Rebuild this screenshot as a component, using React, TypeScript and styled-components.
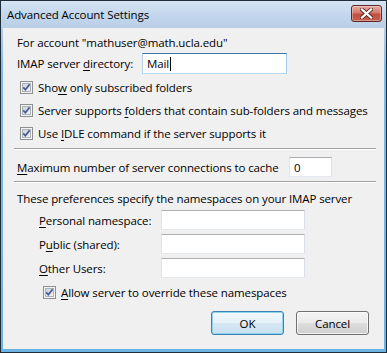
import React from 'react';
import styled, { createGlobalStyle } from 'styled-components';

const Global = createGlobalStyle`
  html, body { margin: 0; padding: 0; background: #ffffff; }
  body { font-family: "Open Sans", "Noto Sans", sans-serif; font-size: 11.5px; letter-spacing: -0.1px; color: #000; }
  #root { width: 387px; height: 353px; }
`;

const Window = styled.div`
  width: 387px;
  height: 353px;
  box-sizing: border-box;
  border: 1px solid #1f2c3a;
  display: flex;
  flex-direction: column;
  background: #6bb3e3;
  overflow: hidden;
`;

const TitleBar = styled.div`
  height: 27px;
  flex: none;
  display: flex;
  align-items: flex-start;
  justify-content: space-between;
  padding: 0 4px 0 6px;
  background: linear-gradient(to bottom, #d6e4f3 0%, #c4d7ed 50%, #b9cee7 100%);
`;

const Title = styled.span`
  font-size: 11.5px;
  line-height: 16px;
  margin-top: 6px;
  color: #000;
`;

const CloseButton = styled.div`
  width: 31px;
  height: 17px;
  box-sizing: border-box;
  margin-top: 4px;
  border: 1px solid #5f2922;
  border-radius: 3px;
  display: flex;
  align-items: center;
  justify-content: center;
  background: linear-gradient(to bottom, #e8a99f 0%, #d47a6d 45%, #c44d3e 55%, #c9604f 100%);
  box-shadow: inset 0 0 0 1px rgba(255, 255, 255, 0.35);
`;

const Frame = styled.div`
  flex: 1;
  display: flex;
  min-height: 0;
  padding: 0 2px 3px 2px;
  background: linear-gradient(to bottom, #b9cee7 0px, #7fbbe6 40px, #6bb3e3 100%);
`;

const Client = styled.div`
  flex: 1;
  min-width: 0;
  overflow: hidden;
  background: #f0f0f0;
  padding: 6px 8px 0 8px;
  display: flex;
  flex-direction: column;
`;

const Row = styled.div<{ $indent?: number; $h?: number; $mt?: number }>`
  display: flex;
  align-items: center;
  margin-left: ${(p) => p.$indent ?? 6}px;
  height: ${(p) => p.$h ?? 16}px;
  margin-top: ${(p) => p.$mt ?? 0}px;
  white-space: nowrap;
  flex: none;
`;

const Label = styled.span<{ $w?: number }>`
  display: inline-block;
  width: ${(p) => (p.$w ? `${p.$w}px` : 'auto')};
  flex: none;
`;

const Field = styled.div<{ $w: number; $h?: number; $focus?: boolean }>`
  width: ${(p) => p.$w}px;
  height: ${(p) => p.$h ?? 20}px;
  flex: none;
  box-sizing: border-box;
  background: #fff;
  border: 1px solid ${(p) => (p.$focus ? '#5c93bc' : '#abadb3')};
  border-top-color: ${(p) => (p.$focus ? '#3d7bad' : '#abadb3')};
  border-right-color: ${(p) => (p.$focus ? '#a4c9e3' : '#dbdfe6')};
  border-bottom-color: ${(p) => (p.$focus ? '#b7d9ed' : '#e3e9ef')};
  border-left-color: ${(p) => (p.$focus ? '#b5cfe7' : '#e2e3ea')};
  padding: 0 0 0 4px;
  display: flex;
  align-items: center;
`;

const Caret = styled.span`
  display: inline-block;
  width: 1px;
  height: 14px;
  background: #000;
  margin-left: 1px;
`;

const Separator = styled.div<{ $mt: number; $mb: number }>`
  height: 1px;
  flex: none;
  margin-top: ${(p) => p.$mt}px;
  margin-bottom: ${(p) => p.$mb}px;
  margin-left: 3px;
  background: #a0a0a0;
  box-shadow: 0 1px 0 #ffffff;
`;

const CheckRow = styled.div<{ $indent: number; $h: number; $mt?: number }>`
  display: flex;
  align-items: center;
  flex: none;
  height: ${(p) => p.$h}px;
  margin-left: ${(p) => p.$indent}px;
  margin-top: ${(p) => p.$mt ?? 0}px;
  gap: 5px;
  white-space: nowrap;
`;

const Buttons = styled.div`
  display: flex;
  flex: none;
  justify-content: flex-end;
  gap: 12px;
  margin-top: 7px;
  margin-right: 7px;
`;

const Button = styled.div<{ $default?: boolean }>`
  width: 73px;
  height: 24px;
  box-sizing: border-box;
  border-radius: 3px;
  border: 1px solid ${(p) => (p.$default ? '#3c7fb1' : '#707070')};
  display: flex;
  align-items: center;
  justify-content: center;
  background: ${(p) =>
    p.$default
      ? 'linear-gradient(to bottom, #f4f9fc 0%, #e6f1f8 48%, #d5e7f3 52%, #c9e0ef 100%)'
      : 'linear-gradient(to bottom, #f2f2f2 0%, #ebebeb 48%, #dddddd 52%, #cfcfcf 100%)'};
  box-shadow: inset 0 0 0 1px ${(p) => (p.$default ? '#8fd3f1' : 'rgba(255,255,255,0.7)')};
`;

const U = styled.span`
  text-decoration: underline;
  text-underline-offset: 2px;
`;

const CheckBox: React.FC = () => (
  <svg width="13" height="13" viewBox="0 0 13 13" style={{ flex: 'none' }}>
    <defs>
      <linearGradient id="cbg" x1="0" y1="0" x2="1" y2="1">
        <stop offset="0" stopColor="#cbcfd5" />
        <stop offset="1" stopColor="#f6f6f6" />
      </linearGradient>
    </defs>
    <rect x="0.5" y="0.5" width="12" height="12" fill="#f4f4f4" stroke="#8e8f8f" />
    <rect x="2.5" y="2.5" width="8" height="8" fill="url(#cbg)" stroke="#aeb3b9" />
    <path d="M3.2 6.3 L5.4 8.6 L9.6 3.4" fill="none" stroke="#4a5f97" strokeWidth="1.7" />
  </svg>
);

const CloseX: React.FC = () => (
  <svg width="13" height="11" viewBox="0 0 13 11">
    <path d="M2 1.5 L11 9.5 M11 1.5 L2 9.5" stroke="#5a2a24" strokeWidth="4" strokeLinecap="square" />
    <path d="M2 1.5 L11 9.5 M11 1.5 L2 9.5" stroke="#ffffff" strokeWidth="2.3" strokeLinecap="square" />
  </svg>
);

export default function App() {
  return (
    <>
      <Global />
      <Window>
        <TitleBar>
          <Title>Advanced Account Settings</Title>
          <CloseButton>
            <CloseX />
          </CloseButton>
        </TitleBar>
        <Frame>
          <Client>
            <Row $h={16}>For account "mathuser@math.ucla.edu"</Row>
            <Row $h={21} $mt={3}>
              <Label $w={125}>
                IMAP server <U>d</U>irectory:
              </Label>
              <Field $w={145} $h={21} $focus>
                Mail
                <Caret />
              </Field>
            </Row>
            <CheckRow $indent={9} $h={23} $mt={2}>
              <CheckBox />
              <span>
                Sho<U>w</U> only subscribed folders
              </span>
            </CheckRow>
            <CheckRow $indent={9} $h={23}>
              <CheckBox />
              <span>
                Server supports <U>f</U>olders that contain sub-folders and messages
              </span>
            </CheckRow>
            <CheckRow $indent={9} $h={23}>
              <CheckBox />
              <span>
                Use <U>I</U>DLE command if the server supports it
              </span>
            </CheckRow>
            <Separator $mt={3} $mb={8} />
            <Row $h={20}>
              <Label $w={272}>
                <U>M</U>aximum number of server connections to cache
              </Label>
              <Field $w={43}>0</Field>
            </Row>
            <Separator $mt={4} $mb={8} />
            <Row $h={16}>These preferences specify the namespaces on your IMAP server</Row>
            <Row $indent={28} $h={20} $mt={4}>
              <Label $w={122}>
                <U>P</U>ersonal namespace:
              </Label>
              <Field $w={144} />
            </Row>
            <Row $indent={28} $h={20} $mt={4}>
              <Label $w={122}>
                P<U>u</U>blic (shared):
              </Label>
              <Field $w={144} />
            </Row>
            <Row $indent={28} $h={20} $mt={4}>
              <Label $w={122}>
                <U>O</U>ther Users:
              </Label>
              <Field $w={144} />
            </Row>
            <CheckRow $indent={32} $h={23} $mt={3}>
              <CheckBox />
              <span>
                <U>A</U>llow server to override these namespaces
              </span>
            </CheckRow>
            <Buttons>
              <Button $default>OK</Button>
              <Button>Cancel</Button>
            </Buttons>
          </Client>
        </Frame>
      </Window>
    </>
  );
}
